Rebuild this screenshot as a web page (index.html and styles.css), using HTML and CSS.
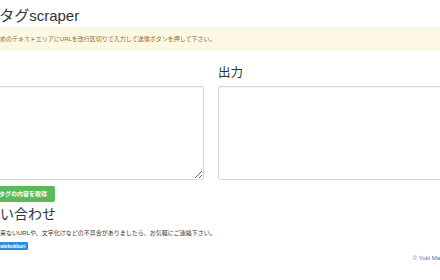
FILE: index.html
```html
<!doctype html>
<html>
<head>
  <meta charset="utf-8">
  <link rel="stylesheet" href="styles.css">
</head>
<body>
  <div class="page">
    <h1 class="title">imgタグscraper</h1>
    <div class="alert">入力のためのテキストエリアにURLを改行区切りで入力して送信ボタンを押して下さい。</div>

    <form class="io">
      <div class="col">
        <h3 class="label">入力</h3>
        <textarea class="box"></textarea>
      </div>
      <div class="col">
        <h3 class="label">出力</h3>
        <textarea class="box"></textarea>
      </div>
    </form>

    <button class="btn-go" type="button">各metaタグの内容を取得</button>

    <h2 class="contact">お問い合わせ</h2>
    <p class="note">取得が出来ないURLや、文字化けなどの不具合がありましたら、お気軽にご連絡下さい。</p>
    <span class="follow">Follow @hatebokkuri</span>

    <footer class="foot">&copy; <a href="#">Yuki Maeda</a></footer>
  </div>
</body>
</html>
```

FILE: styles.css
```css
html, body {
  margin: 0;
  padding: 0;
  overflow: hidden;
  background: #fff;
  font-family: "Liberation Sans", "Noto Sans CJK JP", sans-serif;
  color: #333;
}

.page {
  width: 478px;
  margin-left: -28px;
}

.title {
  margin: 7px 0 0;
  padding-left: 3px;
  font-size: 15px;
  line-height: 17px;
  font-weight: normal;
  color: #333;
}

.alert {
  margin-top: 3px;
  height: 24px;
  padding: 0 4px;
  box-sizing: border-box;
  background: #fcf8e3;
  color: #8a6d3b;
  font-size: 6px;
  line-height: 24px;
}

.io {
  display: grid;
  grid-template-columns: 1fr 1fr;
  gap: 14px;
  margin: 0;
}

.label {
  margin: 14px 0 4px;
  font-size: 12.5px;
  line-height: 17px;
  font-weight: normal;
  color: #333;
}

.box {
  display: block;
  width: 100%;
  height: 94px;
  box-sizing: border-box;
  margin: 0;
  border: 1px solid #d6d6d6;
  border-radius: 2px;
  box-shadow: inset 0 1px 1px rgba(0,0,0,0.05);
  background: #fff;
}

.btn-go {
  display: block;
  margin-top: 6px;
  height: 16px;
  padding: 0 8px 0 7px;
  border: 0;
  border-radius: 2px;
  background: #5cb85c;
  color: #fff;
  font-family: inherit;
  font-size: 6px;
  font-weight: bold;
  line-height: 16px;
}

.contact {
  margin: 1px 0 0;
  font-size: 14px;
  line-height: 22px;
  font-weight: normal;
  color: #333;
}

.note {
  margin: 3px 0 0;
  padding-left: 4px;
  font-size: 6px;
  line-height: 10px;
  color: #333;
}

.follow {
  display: block;
  width: max-content;
  margin-top: 4px;
  height: 8px;
  padding: 0 3px;
  border-radius: 1px;
  background: #2b8fdc;
  color: #fff;
  font-size: 5px;
  font-weight: bold;
  line-height: 8px;
}

.foot {
  margin-top: 3px;
  text-align: right;
  font-size: 6px;
  line-height: 10px;
  color: #777;
}

.foot a {
  color: #4b6fa8;
  text-decoration: none;
}
```
